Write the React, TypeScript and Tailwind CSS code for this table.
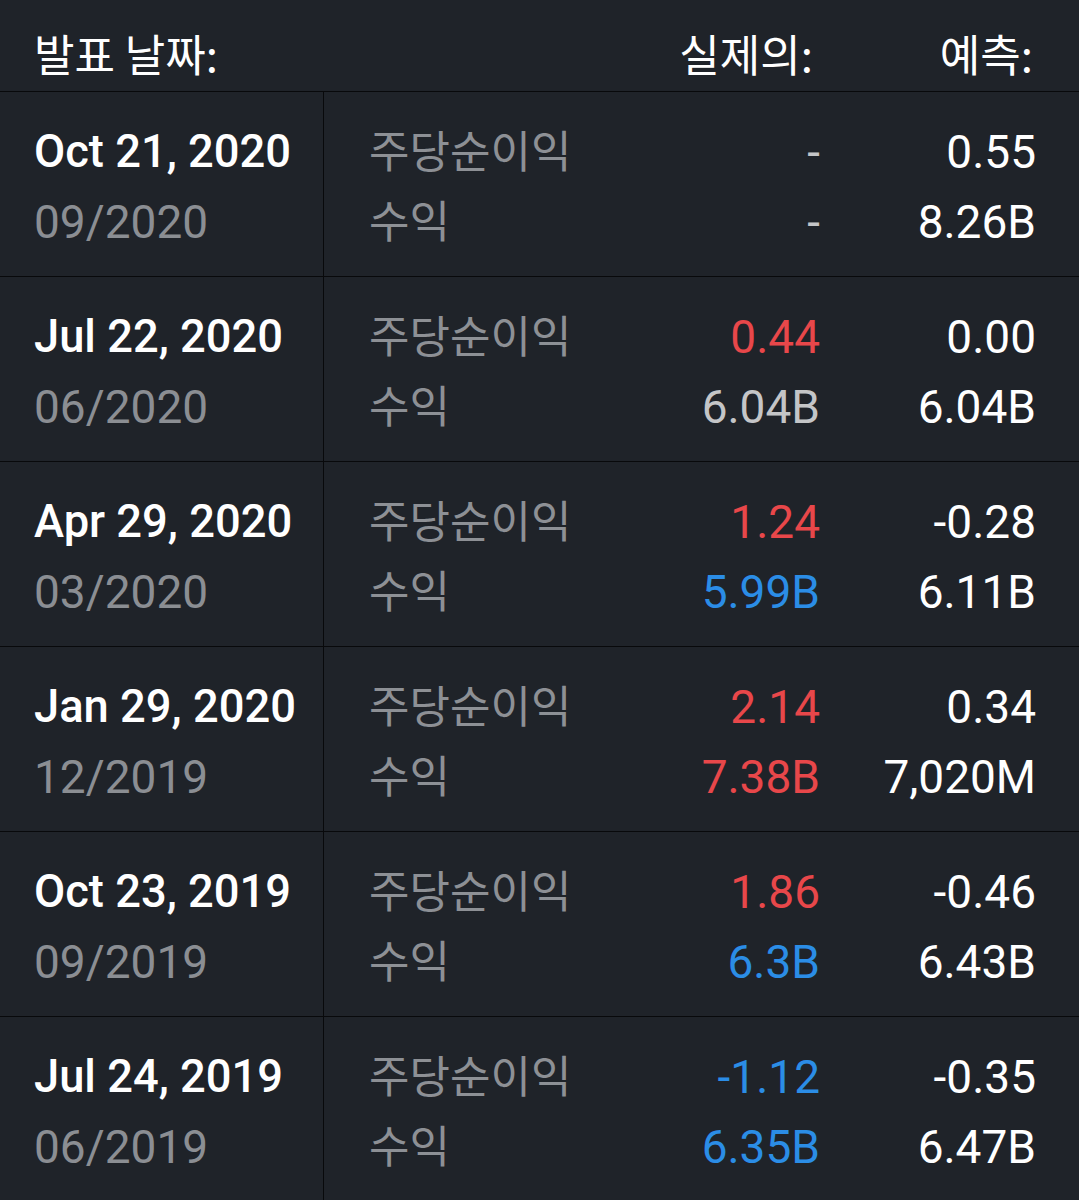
type Tone = 'red' | 'blue' | 'neutral' | 'dash';

interface Row {
    date: string;
    period: string;
    eps: [string, Tone, string];
    revenue: [string, Tone, string];
}

const rows: Row[] = [
    { date: 'Oct 21, 2020', period: '09/2020', eps: ['-', 'dash', '0.55'], revenue: ['-', 'dash', '8.26B'] },
    { date: 'Jul 22, 2020', period: '06/2020', eps: ['0.44', 'red', '0.00'], revenue: ['6.04B', 'neutral', '6.04B'] },
    { date: 'Apr 29, 2020', period: '03/2020', eps: ['1.24', 'red', '-0.28'], revenue: ['5.99B', 'blue', '6.11B'] },
    { date: 'Jan 29, 2020', period: '12/2019', eps: ['2.14', 'red', '0.34'], revenue: ['7.38B', 'red', '7,020M'] },
    { date: 'Oct 23, 2019', period: '09/2019', eps: ['1.86', 'red', '-0.46'], revenue: ['6.3B', 'blue', '6.43B'] },
    { date: 'Jul 24, 2019', period: '06/2019', eps: ['-1.12', 'blue', '-0.35'], revenue: ['6.35B', 'blue', '6.47B'] },
];

const toneClass: Record<Tone, string> = {
    red: 'text-[#e8474a]',
    blue: 'text-[#2b8de6]',
    neutral: 'text-[#c4c5c7]',
    dash: 'text-[#c4c5c7]',
};

const latin = "font-['Roboto','Noto_Sans_CJK_KR',sans-serif]";
const korean = "font-['Noto_Sans_CJK_KR','Noto_Sans',sans-serif]";

function Line({ label, cell }: { label: string; cell: [string, Tone, string] }) {
    return (
        <div className="flex h-[70px] items-start">
            <div className={`flex-1 text-[44px] leading-[64px] text-[#8d9095] ${korean}`}>{label}</div>
            <div className={`text-right text-[46px] leading-[70px] ${latin} ${toneClass[cell[1]]}`}>{cell[0]}</div>
            <div className={`w-[216px] text-right text-[46px] leading-[70px] text-white ${latin}`}>{cell[2]}</div>
        </div>
    );
}

export default function App() {
    return (
        <div className="min-h-screen w-full overflow-hidden bg-[#1f2329]">
            <div className="flex h-[92px] items-center border-b-[1.5px] border-[#08090b] pl-[34px] pr-[46px] pt-[14px]">
                <div className={`flex-1 text-[44px] text-white ${korean}`}>발표 날짜:</div>
                <div className={`text-right text-[44px] text-white ${korean}`}>실제의:</div>
                <div className={`w-[220px] text-right text-[44px] text-white ${korean}`}>예측:</div>
            </div>

            {rows.map((row) => (
                <div key={row.date} className="flex h-[185px] border-b-[1.5px] border-[#08090b]">
                    <div className="w-[324px] border-r-[1.5px] border-[#08090b] pl-[34px] pt-[25px]">
                        <div className={`text-[45.3px] font-medium leading-[70px] text-white ${latin}`}>{row.date}</div>
                        <div className={`text-[46px] leading-[70px] text-[#8b8e93] ${latin}`}>{row.period}</div>
                    </div>
                    <div className="flex-1 pl-[45px] pr-[43px] pt-[25px]">
                        <Line label="주당순이익" cell={row.eps} />
                        <Line label="수익" cell={row.revenue} />
                    </div>
                </div>
            ))}
        </div>
    );
}
